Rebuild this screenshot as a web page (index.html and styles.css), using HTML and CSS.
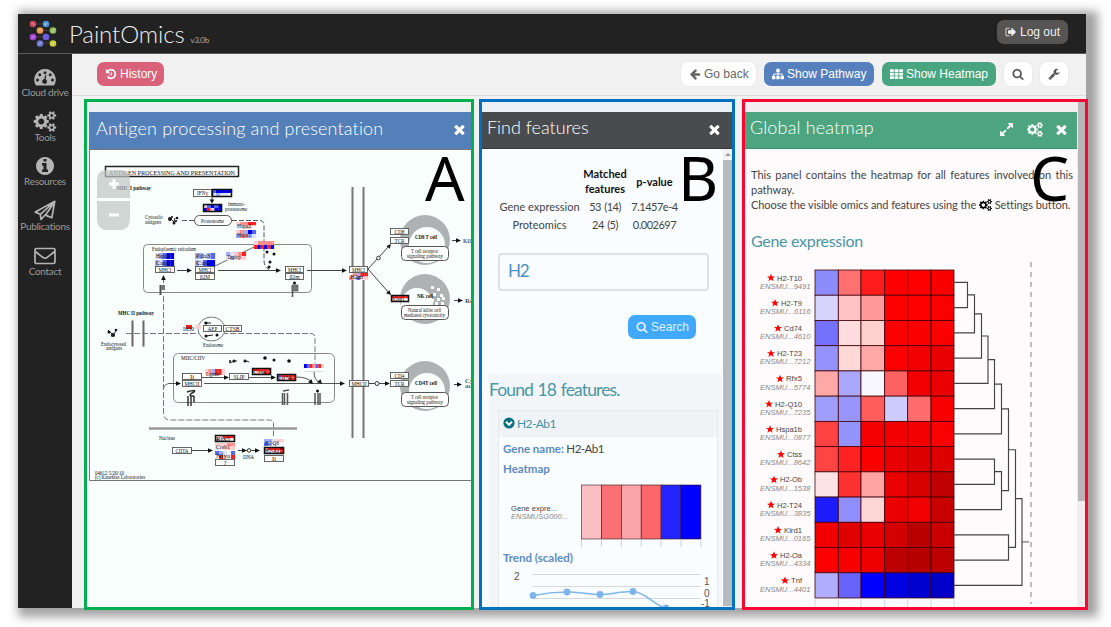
FILE: index.html
```html
<!DOCTYPE html>
<html lang="en">
<head>
<meta charset="utf-8">
<title>PaintOmics</title>
<link rel="stylesheet" href="styles.css">
</head>
<body>
<svg class="sprite" aria-hidden="true">
  <symbol id="i-history" viewBox="0 0 1792 1792"><path d="M1664 896q0 156-61 298t-164 245-245 164-298 61q-172 0-327-72.5t-264-204.5q-7-10-6.5-22.5t8.5-20.5l137-138q10-9 25-9 16 2 23 12 73 95 179 147t225 52q104 0 198.5-40.5t163.5-109.5 109.5-163.5 40.5-198.5-40.5-198.5-109.5-163.5-163.5-109.5-198.5-40.5q-98 0-188 35.5t-160 101.5l137 138q31 30 14 69-17 40-59 40h-448q-26 0-45-19t-19-45v-448q0-42 40-59 39-17 69 14l130 129q107-101 244.5-156.5t284.5-55.5q156 0 298 61t245 164 164 245 61 298zm-640-288v448q0 14-9 23t-23 9h-320q-14 0-23-9t-9-23v-64q0-14 9-23t23-9h224v-352q0-14 9-23t23-9h64q14 0 23 9t9 23z"/></symbol>
  <symbol id="i-search" viewBox="0 0 1792 1792"><path d="M1216 832q0-185-131.5-316.5t-316.5-131.5-316.5 131.5-131.5 316.5 131.5 316.5 316.5 131.5 316.5-131.5 131.5-316.5zm512 832q0 52-38 90t-90 38q-54 0-90-38l-343-342q-179 124-399 124-143 0-273.5-55.5t-225-150-150-225-55.5-273.5 55.5-273.5 150-225 225-150 273.5-55.5 273.5 55.5 225 150 150 225 55.5 273.5q0 220-124 399l343 343q37 37 37 90z"/></symbol>
  <symbol id="i-cogs" viewBox="0 0 1920 1792"><path d="M896 896q0-106-75-181t-181-75-181 75-75 181 75 181 181 75 181-75 75-181zm768 512q0-52-38-90t-90-38-90 38-38 90q0 53 37.5 90.5t90.5 37.5 90.5-37.5 37.5-90.5zm0-1024q0-52-38-90t-90-38-90 38-38 90q0 53 37.5 90.5t90.5 37.5 90.5-37.5 37.5-90.5zm-384 421v185q0 10-7 19.5t-16 10.5l-155 24q-11 35-32 76 34 48 90 115 7 11 7 20 0 12-7 19-23 30-82.5 89.5t-78.5 59.5q-11 0-21-7l-115-90q-37 19-77 31-11 108-23 155-7 24-30 24h-186q-11 0-20-7.5t-10-17.5l-23-153q-34-10-75-31l-118 89q-7 7-20 7-11 0-21-8-144-133-144-160 0-9 7-19 10-14 41-53t47-61q-23-44-35-82l-152-24q-10-1-17-9.5t-7-19.5v-185q0-10 7-19.5t16-10.5l155-24q11-35 32-76-34-48-90-115-7-11-7-20 0-12 7-20 22-30 82-89t79-59q11 0 21 7l115 90q34-18 77-32 11-108 23-154 7-24 30-24h186q11 0 20 7.5t10 17.5l23 153q34 10 75 31l118-89q8-7 20-7 11 0 21 8 144 133 144 160 0 8-7 19-12 16-42 54t-45 60q23 48 34 82l152 23q10 2 17 10.5t7 19.5zm640 533v140q0 16-149 31-12 27-30 52 51 113 51 138 0 4-4 7-122 71-124 71-8 0-46-47t-52-68q-20 2-30 2t-30-2q-14 21-52 68t-46 47q-2 0-124-71-4-3-4-7 0-25 51-138-18-25-30-52-149-15-149-31v-140q0-16 149-31 13-29 30-52-51-113-51-138 0-4 4-7 4-2 35-20t59-34 30-16q8 0 46 46.5t52 67.5q20-2 30-2t30 2q51-71 92-112l6-2q4 0 124 70 4 3 4 7 0 25-51 138 17 23 30 52 149 15 149 31zm0-1024v140q0 16-149 31-12 27-30 52 51 113 51 138 0 4-4 7-122 71-124 71-8 0-46-47t-52-68q-20 2-30 2t-30-2q-14 21-52 68t-46 47q-2 0-124-71-4-3-4-7 0-25 51-138-18-25-30-52-149-15-149-31v-140q0-16 149-31 13-29 30-52-51-113-51-138 0-4 4-7 4-2 35-20t59-34 30-16q8 0 46 46.5t52 67.5q20-2 30-2t30 2q51-71 92-112l6-2q4 0 124 70 4 3 4 7 0 25-51 138 17 23 30 52 149 15 149 31z"/></symbol>
  <symbol id="i-back" viewBox="0 0 1792 1792"><path d="M1664 896v128q0 53-32.500 90.500t-84.500 37.500h-704l293 294q38 36 38 90t-38 90l-75 76q-37 37-90 37-52 0-91-37l-651-652q-37-37-37-90 0-52 37-91l651-650q38-38 91-38 52 0 90 38l75 74q38 38 38 91t-38 91l-293 293h704q52 0 84.500 37.500t32.500 90.500z"/></symbol>
  <symbol id="i-sitemap" viewBox="0 0 1792 1792"><path d="M1792 1248v320q0 40-28 68t-68 28h-320q-40 0-68-28t-28-68v-320q0-40 28-68t68-28h96v-192h-512v192h96q40 0 68 28t28 68v320q0 40-28 68t-68 28h-320q-40 0-68-28t-28-68v-320q0-40 28-68t68-28h96v-192h-512v192h96q40 0 68 28t28 68v320q0 40-28 68t-68 28h-320q-40 0-68-28t-28-68v-320q0-40 28-68t68-28h96v-192q0-52 38-90t90-38h512v-192h-96q-40 0-68-28t-28-68v-320q0-40 28-68t68-28h320q40 0 68 28t28 68v320q0 40-28 68t-68 28h-96v192h512q52 0 90 38t38 90v192h96q40 0 68 28t28 68z"/></symbol>
  <symbol id="i-th" viewBox="0 0 16 14"><path d="M0 1h4.600v3.400H0zM5.700 1h4.600v3.400H5.700zM11.400 1H16v3.400h-4.600zM0 5.400h4.600v3.400H0zM5.700 5.400h4.600v3.400H5.700zM11.400 5.400H16v3.400h-4.600zM0 9.800h4.600v3.400H0zM5.700 9.800h4.600v3.400H5.700zM11.400 9.800H16v3.400h-4.600z"/></symbol>
  <symbol id="i-times" viewBox="250 370 1300 1300"><path d="M1490 1322q0 40-28 68l-136 136q-28 28-68 28t-68-28l-294-294-294 294q-28 28-68 28t-68-28l-136-136q-28-28-28-68t28-68l294-294-294-294q-28-28-28-68t28-68l136-136q28-28 68-28t68 28l294 294 294-294q28-28 68-28t68 28l136 136q28 28 28 68t-28 68l-294 294 294 294q28 28 28 68z"/></symbol>
  <symbol id="i-expand" viewBox="0 0 1792 1792"><path d="M883 1056q0 13-10 23l-332 332 144 144q19 19 19 45t-19 45-45 19h-448q-26 0-45-19t-19-45v-448q0-26 19-45t45-19 45 19l144 144 332-332q10-10 23-10t23 10l114 114q10 10 10 23zm781-864v448q0 26-19 45t-45 19-45-19l-144-144-332 332q-10 10-23 10t-23-10l-114-114q-10-10-10-23t10-23l332-332-144-144q-19-19-19-45t19-45 45-19h448q26 0 45 19t19 45z"/></symbol>
  <symbol id="i-wrench" viewBox="0 0 1792 1792"><path d="M448 1472q0-26-19-45t-45-19-45 19-19 45 19 45 45 19 45-19 19-45zm644-420l-682 682q-37 37-90 37-52 0-91-37l-106-108q-38-36-38-90 0-53 38-91l681-681q39 98 114.500 173.500t173.500 114.500zm634-435q0 39-23 106-47 134-164.500 217.500t-258.500 83.500q-185 0-316.500-131.500t-131.500-316.500 131.500-316.500 316.500-131.500q58 0 121.500 16.500t107.500 46.500q16 11 16 28t-16 28l-293 169v224l193 107q5-3 79-48.500t135.500-81 70.500-35.500q15 0 23.500 10t8.500 25z"/></symbol>
  <symbol id="i-signout" viewBox="0 0 1792 1792"><path d="M704 1440q0 4 1 20t.5 26.500-3 23.500-10 19.500-20.500 6.500h-320q-119 0-203.500-84.500t-84.500-203.500v-704q0-119 84.500-203.500t203.500-84.500h320q13 0 22.500 9.500t9.500 22.500q0 4 1 20t.5 26.500-3 23.500-10 19.500-20.500 6.500h-320q-66 0-113 47t-47 113v704q0 66 47 113t113 47h312l11.500 1 11.500 3 8 5.500 7 9 2 13.500zm928-544q0 26-19 45l-544 544q-19 19-45 19t-45-19-19-45v-288h-448q-26 0-45-19t-19-45v-384q0-26 19-45t45-19h448v-288q0-26 19-45t45-19 45 19l544 544q19 19 19 45z"/></symbol>
  <symbol id="i-info" viewBox="128 128 1536 1536"><path d="M1152 1376v-160q0-14-9-23t-23-9h-96v-512q0-14-9-23t-23-9h-320q-14 0-23 9t-9 23v160q0 14 9 23t23 9h96v320h-96q-14 0-23 9t-9 23v160q0 14 9 23t23 9h448q14 0 23-9t9-23zm-128-896v-160q0-14-9-23t-23-9h-192q-14 0-23 9t-9 23v160q0 14 9 23t23 9h192q14 0 23-9t9-23zm640 416q0 209-103 385.500t-279.500 279.500-385.500 103-385.500-103-279.500-279.500-103-385.500 103-385.500 279.500-279.500 385.500-103 385.500 103 279.500 279.500 103 385.500z"/></symbol>
</svg>

<div class="window">
  <header class="topbar">
    <svg class="logo" viewBox="0 0 30 30">
      <path d="M4 4h13M11 10.500l13 0M4 17l13 0M17 4l7 6.500M11 10.500l6 6.500 6 6.500M11 23h12" stroke="#4a4048" stroke-width=".8" fill="none"/>
      <circle cx="4" cy="4" r="3.300" fill="#c94a5e"/><circle cx="17" cy="4" r="3.300" fill="#4b90d8"/>
      <circle cx="11" cy="10.500" r="3.300" fill="#e8964a"/><circle cx="24" cy="10.500" r="3.300" fill="#8fbf62"/>
      <circle cx="4" cy="17" r="3.300" fill="#a945d8"/><circle cx="17" cy="17" r="3.300" fill="#6e5ee0"/>
      <circle cx="11" cy="23.500" r="3.300" fill="#6d78cf"/><circle cx="24" cy="23.500" r="3.300" fill="#c9cb3a"/>
      <path d="M2.500 3l3 2M15.500 5l3-2M2.500 18l3-2M22.500 12l3-3M9.500 24.500l3-2M22.500 24.500l3-2M15.500 3l2 2M9.500 10h3" stroke="#fff" stroke-opacity=".55" stroke-width=".9"/>
    </svg>
    <span class="brand">PaintOmics</span><span class="version">v3.0b</span>
    <button class="btn logout"><svg><use href="#i-signout"/></svg>Log out</button>
  </header>
  <div class="layout">
    <nav class="sidebar">
      <a class="item"><svg viewBox="0 0 22 18"><path fill-rule="evenodd" d="M11 1A10.700 10.700 0 0 0 2 17.500h18A10.700 10.700 0 0 0 11 1zM11 3.300a1.500 1.500 0 1 1 0 3 1.500 1.500 0 0 1 0-3zM5.800 5.300a1.500 1.500 0 1 1 0 3 1.500 1.500 0 0 1 0-3zM16.200 5.300a1.500 1.500 0 1 1 0 3 1.500 1.500 0 0 1 0-3zM3.500 10.500a1.500 1.500 0 1 1 0 3 1.500 1.500 0 0 1 0-3zM18.500 10.500a1.500 1.500 0 1 1 0 3 1.500 1.500 0 0 1 0-3zM12.500 7l-.9 4.300a2.400 2.400 0 1 1-1.400-.2L11.500 7z"/></svg><span>Cloud drive</span></a>
      <a class="item"><svg class="gears"><use href="#i-cogs"/></svg><span>Tools</span></a>
      <a class="item"><svg><use href="#i-info"/></svg><span>Resources</span></a>
      <a class="item"><svg viewBox="0 0 22 20" class="line plane"><path d="M20.800.8L1.300 11.600l5 2.200L20.800.8l-3 16.500-6.300-2.700L20 2.500M6.300 13.800l.7 5.200 4-4.500"/></svg><span>Publications</span></a>
      <a class="item"><svg viewBox="0 0 22 18" class="line"><rect x="1" y="1.500" width="20" height="15" rx="1.600"/><path d="M1.300 4.500c3 2.500 5 3.900 7.700 6q2 1.300 4 0c2.700-2.100 4.700-3.500 7.700-6"/></svg><span>Contact</span></a>
    </nav>
    <main class="main">
      <div class="toolbar">
        <button class="btn history"><svg><use href="#i-history"/></svg>History</button>
        <button class="btn white back"><svg><use href="#i-back"/></svg>Go back</button>
        <button class="btn pathway"><svg><use href="#i-sitemap"/></svg>Show Pathway</button>
        <button class="btn heatmap"><svg><use href="#i-th"/></svg>Show Heatmap</button>
        <button class="btn white square"><svg><use href="#i-search"/></svg></button>
        <button class="btn white square"><svg><use href="#i-wrench"/></svg></button>
      </div>
      <div class="panels">
        <section class="frame frame-a">
          <h2 class="head"><span class="t">Antigen processing and presentation</span><svg class="x"><use href="#i-times"/></svg></h2>
          <svg id="pathway" class="diagram" viewBox="87 149 384 458"></svg>
          <span class="mark">A</span>
        </section>
        <section class="frame frame-b">
          <h2 class="head"><span class="t">Find features</span><svg class="x"><use href="#i-times"/></svg></h2>
          <div class="scroller">
            <div class="content">
              <div class="stats">
                <span></span><b>Matched features</b><b>p-value</b>
                <span>Gene expression</span><span>53 (14)</span><span>7.1457e-4</span>
                <span>Proteomics</span><span>24 (5)</span><span>0.002697</span>
              </div>
              <div class="query">H2</div>
              <button class="btn search"><svg><use href="#i-search"/></svg>Search</button>
              <div class="results">
                <h3>Found 18 features.</h3>
                <div class="card">
                  <div class="card-head"><svg viewBox="0 0 12 12"><circle cx="6" cy="6" r="5.600" fill="#06727f"/><path d="M3 4.800l3 3 3-3" fill="none" stroke="#fff" stroke-width="2"/></svg>H2-Ab1</div>
                  <p><b>Gene name:</b> H2-Ab1</p>
                  <p class="sub"><b>Heatmap</b></p>
                  <svg id="mini" class="mini" viewBox="499 479 218 71"></svg>
                  <p class="sub"><b>Trend (scaled)</b></p>
                  <svg class="trend" viewBox="499 567 218 44">
                    <path d="M532 574.500h169M532 586.500h169M532 598.500h169" stroke="#d5d9dc"/>
                    <path d="M533 595.500C545 593 555 592 567 592s22 2.500 33 2.500 22-3.500 33-3c14 1 20 14 33 16.500" fill="none" stroke="#7cb5ec" stroke-width="1.500"/>
                    <g fill="#7cb5ec"><circle cx="533" cy="595.500" r="3.400"/><circle cx="567" cy="592" r="3.400"/><circle cx="600" cy="594.500" r="3.400"/><circle cx="633" cy="591.500" r="3.400"/><circle cx="666" cy="608" r="3.400"/></g>
                    <text x="514" y="580">2</text><text x="704" y="585">1</text><text x="704" y="597">0</text><text x="701" y="607">-1</text>
                  </svg>
                </div>
              </div>
            </div>
            <div class="bar"><i></i></div>
          </div>
          <span class="mark">B</span>
        </section>
        <section class="frame frame-c">
          <div class="column">
            <h2 class="head"><span class="t">Global heatmap</span><svg><use href="#i-expand"/></svg><svg class="cog"><use href="#i-cogs"/></svg><svg class="x"><use href="#i-times"/></svg></h2>
            <div class="intro">
              <p class="spread">This panel contains the heatmap for all features involved on this</p>
              <p>pathway.</p>
              <p class="spread">Choose the visible omics and features using the <svg><use href="#i-cogs"/></svg> Settings button.</p>
            </div>
            <h3>Gene expression</h3>
            <svg id="heat" class="heat" viewBox="745 255 332 352"></svg>
          </div>
          <div class="pagebar"><i></i></div>
          <span class="mark">C</span>
        </section>
      </div>
    </main>
  </div>
</div>
<script src="app.js"></script>
</body>
</html>
```
FILE: styles.css
```css
* { box-sizing: border-box; }
body { margin: 0; height: 627px; overflow: hidden; background: #fff; font-family: Lato, sans-serif; color: #444; padding: 14px 0 0 18px; }
svg { fill: currentColor; display: block; flex: none; }
h2, h3, p { margin: 0; font-weight: 400; }
.sprite { display: none; }
.window { width: 1068px; height: 594px; background: #f1f1f1; box-shadow: 6px 3px 9px 6px rgba(0,0,0,.36); display: flex; flex-direction: column; }

.topbar { height: 40px; flex: none; background: #222; border-bottom: 1px solid #5a5a5a; display: flex; align-items: center; padding: 0 18px 0 11px; color: #ddd; }
.logo { width: 30px; height: 30px; margin-top: 3px; }
.brand { font-size: 24px; font-weight: 300; color: #eee; margin-left: 10px; line-height: 38px; letter-spacing: -.1px; }
.version { font-size: 8px; margin: 12px auto 0 6px; color: #aaa; letter-spacing: -.3px; }

.btn { border: 0; border-radius: 7px; height: 24px; padding: 0 8px; display: flex; align-items: center; gap: 3px; font: 12px "Liberation Sans", sans-serif; color: #fff; white-space: nowrap; }
.btn svg { width: 12px; height: 12px; }
.logout { background: #575553; width: 71px; color: #eee; margin-top: -3px; }
.white { background: #fff; color: #666; box-shadow: 0 0 2px #ddd; }
.history { background: #d9627a; width: 67px; }
.back { margin-left: auto; width: 75px; }
.pathway { background: #557fbd; width: 110px; }
.heatmap { background: #48a580; width: 114px; }
.heatmap svg { width: 13px; }
.square { width: 28px; justify-content: center; color: #555; }

.layout { flex: 1; display: flex; min-height: 0; }
.sidebar { width: 54px; flex: none; background: #222; color: #b4b4b4; padding-top: 14px; }
.item { height: 44.7px; display: flex; flex-direction: column; align-items: center; font-size: 10px; line-height: 10px; white-space: nowrap; letter-spacing: -.3px; }
.item svg { width: 22px; height: 18px; margin-bottom: 1px; }
.item span { color: #999; }
.item .gears { width: 24px; height: 21px; margin: -2px 0 0; }
.item .plane { height: 21px; margin: -2px 0 0; }
.line { fill: none; stroke: currentColor; stroke-width: 1.7; stroke-linejoin: round; }

.main { flex: 1; display: flex; flex-direction: column; min-width: 0; }
.toolbar { height: 42px; flex: none; border-bottom: 1px solid #dcdcdc; display: flex; align-items: center; gap: 8px; padding: 0 18px 2px 25px; }
.panels { display: flex; padding: 3px 0 0 12px; }
.frame { position: relative; height: 511px; border: 3px solid; display: flex; flex-direction: column; flex: none; padding-top: 10px; }
.frame-a { width: 390px; border-color: #00b050; background: #eaf1f0; margin-right: 5px; }
.frame-b { width: 256px; border-color: #0070c0; background: #ecf1f5; margin-right: 7px; }
.frame-c { width: 346px; border-color: #fb0632; background: #f3eff0; flex-direction: row; padding-top: 0; }

.head { height: 37px; flex: none; display: flex; align-items: center; color: #fff; padding-right: 6px; }
.head .t { font-size: 18px; font-weight: 300; margin-right: auto; line-height: 20px; padding-bottom: 6px; white-space: nowrap; }
.head svg { width: 15px; height: 15px; margin-top: -2px; }
.head .x { width: 11px; height: 11px; margin-top: 0; }
.frame-a .head { margin-left: 2px; background: #5480b9; padding-left: 7px; }
.frame-a .t { letter-spacing: .15px; }
.frame-b .head { background: #494c4f; border-bottom: 1px solid #36383a; padding: 0 12px 0 5px; }
.frame-c .head { background: #4da580; border-bottom: 1px solid #38906c; padding: 0 10px 0 5px; }
.frame-c .head .t { letter-spacing: .15px; }
.frame-c .head svg { margin-left: 13px; }
.frame-c .head .cog { width: 16px; }
.diagram { width: 384px; height: 458px; background: #f8fffd; }
.diagram text { font-family: "Liberation Serif", serif; font-size: 7px; fill: #111; }

.mark { position: absolute; top: 40px; font: 62px/70px "Noto Sans", sans-serif; color: #000; }
.frame-a .mark { left: 338px; }
.frame-b .mark { left: 196px; }
.frame-c .mark { left: 285px; }

.scroller { flex: 1; min-height: 0; overflow: hidden; display: flex; background: #fafdff; }
.content { width: 241px; padding-top: 17px; }
.bar { width: 9px; background: #f0f2f4; padding-top: 11px; }
.bar::before { content: ""; display: block; width: 0; margin: -7px 0 4px 2px; border: 3px solid transparent; border-top-width: 0; border-bottom: 3px solid #999; }
.bar i { display: block; height: 446px; background: #b5babd; }
.stats { display: grid; grid-template-columns: 83px 48px 51px; grid-template-rows: 32px 18px 18px; margin-left: 16px; font-size: 11px; text-align: center; line-height: 18px; align-items: center; white-space: nowrap; }
.stats b { line-height: 15px; white-space: normal; color: #111; margin-bottom: 2px; }
.stats span:nth-child(3n+2), .stats span:nth-child(3n) { letter-spacing: -.5px; word-spacing: 1px; }
.query { margin: 19px 0 0 16px; width: 211px; height: 38px; border: 2px solid #dde1e5; border-radius: 4px; padding-left: 8px; line-height: 32px; font-size: 17px; letter-spacing: -1.2px; color: #4a8fc0; }
.search { margin: 24px 0 0 146px; width: 68px; background: #40a9fb; color: #dff0ff; }
.results { margin: 35px 0 0 7px; width: 233px; background: #f3f6f9; padding-top: 5px; height: 250px; }
h3 { font-size: 17px; color: #4a96a4; line-height: 22px; letter-spacing: -.88px; word-spacing: 1px; }
.results h3 { font-size: 17.5px; }
.card { margin: 9px 4px 0 9px; height: 230px; border: 1px solid #e6eaed; background: #fafdff; }
.card-head { height: 26px; background: #f0f3f6; display: flex; align-items: center; gap: 2px; padding: 0 0 2px 4px; color: #3f94a2; font-size: 12px; letter-spacing: -.6px; }
.card-head svg { width: 12px; height: 12px; }
.card p { padding-left: 4px; font-size: 11.500px; line-height: 23px; letter-spacing: -.5px; }
.card .sub { line-height: 18px; }
.card b { color: #5a8bc4; letter-spacing: 0; }
.mini { width: 218px; height: 71px; }
.trend { width: 218px; height: 44px; }
.mini text, .heat text { font-family: "Liberation Sans", sans-serif; font-size: 8px; fill: #444; }
.mini .id, .heat .id { fill: #888; font-style: italic; }
.trend text { font: 10px "Liberation Sans", sans-serif; fill: #555; }

.column { width: 332px; padding-top: 10px; background: linear-gradient(#f3eff0 10px, #fffbfc 10px); }
.pagebar { width: 8px; background: #f0edee; padding-left: 1px; }
.pagebar i { display: block; height: 399px; background: #bab6b8; }
.intro { padding: 18px 4px 0 6px; font-size: 11px; line-height: 15px; color: #444; }
.spread { text-align: justify; text-align-last: justify; white-space: nowrap; }
.intro .spread:last-child { margin-right: 3px; letter-spacing: -.07px; }
.intro svg { display: inline-block; width: 13px; height: 12px; vertical-align: -2px; color: #000; }
.column h3 { padding: 18px 0 0 6px; height: 43px; font-size: 16px; letter-spacing: -.3px; word-spacing: 0; }
.heat { width: 332px; height: 352px; }
```
FILE: app.js
```js
let out = '';
const flush = id => {
  document.getElementById(id).innerHTML = out;
  out = '';
};
const rect = (x, y, w, h, fill, stroke = 'none', sw = 1, rx = 0) => {
  out += `<rect x="${x}" y="${y}" width="${w}" height="${h}" fill="${fill}" stroke="${stroke}" stroke-width="${sw}" rx="${rx}"/>`;
};
const path = (d, stroke = '#444', extra = '') => {
  out += `<path d="${d}" fill="none" stroke="${stroke}" ${extra}/>`;
};
const text = (x, y, s, w, extra = '') => {
  out += `<text x="${x}" y="${y}" ${w ? `textLength="${w}" lengthAdjust="spacingAndGlyphs"` : ''} ${extra}>${s}</text>`;
};
const box = (x, y, w, h, s, tw) => {
  rect(x + .5, y + .5, w - 1, h - 1, '#fff', '#555', .9);
  text(x + (w - tw) / 2, y + h / 2 + 2.3, s, tw);
};
const arrow = (x, y, dir = 'r') => {
  const d = { r: 'l-5 -2.300v4.600z', d: 'l-2.300 -4h4.600z', u: 'l-2.300 5h4.600z', dr: 'l-5 -1.800 3.500 -3z', ur: 'l-4.500 2 3.200 2.800z' }[dir];
  out += `<path d="M${x} ${y}${d}" fill="#111"/>`;
};
/* one strip of expression cells per row; each letter is a colour of the palette */
const palette = { b: '#0000e8', m: '#5566f0', l: '#a3aef8', p: '#dde2fd', w: '#fbf6fc', k: '#ffd0d0', s: '#ff8f8f', r: '#fb2020', d: '#b80008' };
const strip = (x, y, w, h, rows, label, frame) => {
  const rh = h / rows.length;
  rows.forEach((row, j) => [...row].forEach((c, i) => rect(x + i * w / row.length, y + j * rh, w / row.length + .1, rh, palette[c])));
  if (frame) rect(x + .5, y + .5, w - 1, h - 1, 'none', '#111', 1.500);
  if (label) text(x + 1, y + h - 1, label, w * .7);
};
const dots = pts => pts.forEach(([x, y, r = 1.500]) => { out += `<circle cx="${x}" cy="${y}" r="${r}" fill="#111"/>`; });

/* Pathway map */
path('M89.500 149.500V480.500H471M89 149.500H471', '#777');
rect(105.500, 166.500, 133, 10, '#fff', '#222', 1.500);
text(109, 174.500, 'ANTIGEN PROCESSING AND PRESENTATION', 126);
text(117, 190, 'MHC I pathway', 34, 'font-weight="bold"');
text(118, 314.500, 'MHC II pathway', 36, 'font-weight="bold"');
path('M352.500 187v251M363.500 187v251', '#777', 'stroke-width="2"');
box(193, 189, 19, 8, 'IFNγ', 11);
strip(212, 189, 20, 8, ['mbbbb', 'plppw'], '', true);
path('M212 197v4'); arrow(212, 203.500, 'd');
strip(203, 204, 19, 8, ['kmbmb', 'brkbb'], '', true);
text(228, 206, 'Immuno-', 17); text(225, 211, 'proteasome', 22);
text(145, 219, 'Cytosolic', 18); text(145, 224, 'antigens', 16);
path('M182 220.500h12M232 220.500h28q4 0 4 5v34q0 8 5 10', '#555', 'stroke-dasharray="5 2"');
rect(194.500, 215.500, 37, 10, '#fff', '#555', 1, 5); text(201, 222.500, 'Proteasome', 23);
dots([[170, 219, 2], [174, 223, 1.500], [177, 218, 1.300], [172, 217, 1], [176, 221, 1]]);
path('M169 217l5 5 1-4M173 224l4-4', '#222');
strip(236, 222, 20, 7, ['kssrr', 'wwkkw'], 'Hspa2');
strip(236, 230, 20, 8, ['kslbm', 'lsslp'], 'Hspa1');
rect(143.500, 244.500, 168, 48, 'none', '#888', 1, 4);
text(152, 251, 'Endoplasmic reticulum', 44);
path('M215 266l39-19', '#666');
strip(155, 253, 19, 6, ['plmbb'], 'Hspa5'); strip(155, 260, 19, 6, ['lpmbb'], 'Canx');
strip(195, 253, 20, 6, ['llplm'], 'Pdia3'); strip(195, 260, 20, 6, ['lpmbb'], 'Calr');
box(155, 266, 20, 7, 'MHCI', 13); box(195, 266, 20, 7, 'MHCI', 13); box(195, 273, 20, 7, 'β2M', 10);
strip(226, 252, 20, 8, ['lpksr', 'plpkk'], 'Tapbp');
strip(254, 241, 20, 4, ['kssss']); strip(254, 245, 20, 4, ['rbrbrb']);
dots([[267, 252], [274, 254], [270, 262], [269, 267]]);
path('M177 270.500h12M218 270.500h58M307 270.500h36'); arrow(192, 270.500); arrow(281, 270.500); arrow(347, 270.500);
box(285, 266, 19, 7, 'MHCI', 13); box(285, 273, 19, 7, 'β2m', 10);
arrow(163.500, 275, 'u');
path('M163.500 280v3M163.500 296v116q0 8 6 8h100q4 0 4 4v12', '#777', 'stroke-dasharray="6 2"');
path('M160.500 285v10', '#555', 'stroke-width="2"'); rect(161, 285, 4, 5, '#777'); 
dots([[294.500, 283]]); path('M292.500 286v11', '#555', 'stroke-width="1.500"'); rect(292, 285, 6, 6, '#777', '#555', .7);

/* Cells on the right-hand side */
[[240, 'CD8 T cell', 'T cell receptor', 'signaling pathway'], [299, 'NK cell', 'Natural killer cell', 'mediated cytotoxicity'], [386, 'CD4T cell', 'T cell receptor', 'signaling pathway']].forEach(([cy, name, a, b], i) => {
  out += `<circle cx="425" cy="${cy}" r="25" fill="#aeb2b2"/><circle cx="${i === 1 ? 417 : 427}" cy="${cy + 5}" r="${i === 1 ? 16 : 18}" fill="#f8fffd"/>`;
  rect(401.500, cy + 6.500, 47, 14, '#fff', '#555', 1, 4);
  text(i === 1 ? 417 : 415, cy - 1, name, i === 1 ? 16 : 22, 'font-weight="bold"');
  text(i === 1 ? 408 : 411, cy + 12.500, a, i === 1 ? 33 : 27); text(i === 1 ? 404 : 407, cy + 17.800, b, i === 1 ? 41 : 36);
});
[[432, 287], [438, 289], [434, 294], [441, 295], [432, 300], [438, 299], [443, 298], [436, 303], [442, 303]].forEach(([x, y]) => rect(x - 1, y - 1, 3, 3, '#f8fffd'));
box(390, 228, 19, 7, 'CD8', 10); box(390, 237, 19, 7, 'TCR', 10);
strip(391, 295, 18, 7, ['rrrrr', 'wwkww'], 'Klrd1', true);
box(390, 372, 19, 7, 'CD4', 10); box(390, 380, 19, 7, 'TCR', 10);
path('M368 269l22-24M368 269l22 25'); arrow(391, 244, 'ur'); arrow(391, 295, 'dr');
out += '<circle cx="378.500" cy="258" r="1.800" fill="#fff" stroke="#333"/>';
box(349, 266, 19, 7, 'MHCI', 13); strip(349, 273, 19, 3.500, ['wslrr']); strip(349, 276.500, 19, 3.500, ['spmwk'], 'B2m');
path('M452 240.500h5M454 300.500h5M454 384.500h5'); arrow(461, 240.500); arrow(463, 300.500); arrow(462, 384.500);
text(463, 242.500, 'Killing', 18); text(465, 302.500, 'Regul', 18); text(465, 383, 'Cytok', 18); text(465, 388, 'activ', 16);

/* MHC II */
path('M132.500 320.500v26M143.500 320.500v26', '#666', 'stroke-width="2"');
path('M126 333.500h185q4 0 4 4v26', '#777', 'stroke-dasharray="6 2"');
dots([[109, 332, 1.500], [113, 335, 2], [116, 330, 1.300]]); path('M108 330l5 5 3-4M111 336l4-1', '#222');
text(101, 345.500, 'Endocytosed', 25); text(106, 350, 'antigens', 16);
out += '<ellipse cx="211.500" cy="329" rx="13.500" ry="12" fill="#f8fffd" stroke="#777"/>';
path('M204 323l7 0M206 336l7-1', '#222'); dots([[206, 323], [206, 336], [217, 335]]);
box(203, 325, 19, 7, 'AEP', 10); box(223, 325, 19, 7, 'CTSB', 14);
strip(183, 325, 18, 4, ['wrrwkk'], ''); text(183, 331, 'Ifi30', 11); text(203, 347, 'Endosome', 20);
rect(173.500, 353.500, 161, 49, 'none', '#888', 1, 5);
text(181, 360, 'MIIC/CIIV', 24);
dots([[234, 361], [245, 361], [265, 358, 1.800], [274, 360, 1.500], [289, 361, 1.800], [230, 361, 1]]); path('M229 363l6-2 2 0M244 360l5 2', '#222');
box(182, 373, 20, 7, 'Ii', 4); box(182, 380, 20, 7, 'MHCII', 15);
strip(205, 369, 20, 6, ['kslrrk'], ''); text(206, 376, 'Lgmn', 13);
box(229, 373, 20, 7, 'SLIP', 11);
strip(252, 368, 19, 7, ['rrrrr', 'wkwrr'], 'Ctss', true); strip(277, 374, 19, 7, ['mrrrr', 'lkwrr'], 'Cd74', true);
path('M202 377.500h24M249 377.500h25M296 377q11 0 16 5M314 371q0 9 5 11', '#555'); arrow(229, 377.500); arrow(276, 377.500);
path('M204 383.500h137M168 383.500h10', '#555'); path('M163.500 388q1-4 5-4.500', '#777'); arrow(181, 383.500); arrow(345, 383.500); arrow(313, 384, 'dr'); arrow(322, 384, 'dr');
strip(304, 364, 20, 4, ['bmrsmrk']); path('M305 371.500h18', '#ddd');
path('M187 392q10-3 7 0-8 4 0 4M188 396v10M191 396v10M194 396v6', '#333', 'stroke-width="1.500"');
path('M283 391l6-1M282.500 393v12M284.500 393v12M287.500 393v12M315 393v12M318 393v12M320 393v12', '#555', 'stroke-width="1.500"'); dots([[317.500, 391]]);
box(349, 380, 20, 7, 'MHCII', 15);
path('M369 383.500h17'); out += '<circle cx="377" cy="383.500" r="2" fill="#fff" stroke="#333"/>'; arrow(390, 383.500);
path('M149 428.500h148', '#999', 'stroke-width="2.500"');
text(159, 440, 'Nucleus', 16);
box(172, 447, 20, 7, 'CIITA', 13); path('M192 450.500h18'); arrow(213, 450.500);
strip(215, 435, 20, 7, ['kkrrr', 'lkkww'], 'Rfx5', true); strip(215, 443, 20, 7, ['kkkss', 'pwkkk'], 'Creb1'); strip(215, 451, 20, 8, ['mlpwm', 'wrkwr'], 'Nfya');
box(215, 459, 20, 7, '?', 3);
path('M238 450.500h17'); arrow(247, 450.500); arrow(260, 450.500); out += '<circle cx="249" cy="450.500" r="1.800" fill="#fff" stroke="#333"/>';
text(243, 458.500, 'DNA', 11);
strip(264, 439, 20, 7, ['llpkk', 'mlpww'], 'H2-Q6'); strip(264, 447, 20, 7, ['srrrd', 'kwkkr'], 'H2-Aa', true); box(264, 455, 20, 7, 'Ii', 4);
text(95, 474.500, '04612 5/20/10', 29); text(95, 479.300, '(c) Kanehisa Laboratories', 50);

/* Zoom buttons */
out += '<path d="M97 198v-17q0-11 10-11h13q10 0 10 11v17zM97 201h33v17q0 12-10 12h-13q-10 0-10-12z" fill="#bfc4c2" fill-opacity=".7"/><path d="M109 184h10M114 179v10M109 215h10" stroke="#fff" stroke-width="3" fill="none"/>';
flush('pathway');

/* Single-feature heatmap */
['#f9bfc2', '#fa7174', '#faa6a9', '#fb6669', '#2424fc', '#0000fe'].forEach((c, i) => rect(581.500 + i * 19.900, 486, 19.900, 54, c, '#3a1520', .6));
for (let i = 0; i < 7; i++) path(`M${581.500 + i * 19.900} 540v8`, '#c3d2e4');
text(511, 512, 'Gene expre...', 46);
text(511, 520, 'ENSMUSG000...', 57, 'class="id"');
flush('mini');

/* Global heatmap: label, id suffix, label start, cell colours */
const genes = [
  ['H2-T10', 9491, 777, '#8c8cfc #ff7070 #ff1c1c #ff0000 #ff0000 #f80000'],
  ['H2-T9', 6116, 781, '#d6d4fc #ffc2c4 #ff9a9a #ff0000 #ff0000 #fa0000'],
  ['Cd74', 4610, 784, '#7472fc #ffdcde #ffd0d0 #fa0000 #fa0000 #fa0000'],
  ['H2-T23', 7212, 777, '#9492fc #ffd8d8 #ffa8a8 #fa0000 #f20000 #e80000'],
  ['Rfx5', 5774, 786, '#ffa8a8 #aaa8fc #f8f6ff #ff6262 #f20000 #ea0000'],
  ['H2-Q10', 7235, 775, '#a09efc #9896fa #ff5c5c #ccccfe #ff6c6c #f80000'],
  ['Hspa1b', 877, 776, '#ff4242 #9492fc #f40000 #f20000 #f20000 #fa0000'],
  ['Ctss', 8642, 787, '#ff4444 #ff2222 #fc0000 #e80000 #dc0000 #dc0000'],
  ['H2-Ob', 1538, 780, '#ffe4e6 #ff3030 #ffa4a4 #ea0000 #d60000 #c00000'],
  ['H2-T24', 3835, 777, '#1c1cfc #908efc #ffd6d6 #ea0000 #f00000 #c80000'],
  ['Klrd1', 165, 784, '#f20000 #e00000 #e80000 #d40000 #b80000 #c80000'],
  ['H2-Oa', 4334, 780, '#fc0000 #f80000 #ee0000 #ba0000 #b60000 #bc0000'],
  ['Tnf', 4401, 791, '#b0aefc #6664fc #0000ff #0000e0 #0000d0 #0000c8']
];
const xs = [815, 838.300, 861, 884.700, 907.700, 931, 954];
const step = 25.230;
genes.forEach(([name, id, x, cells], j) => {
  const y = 270 + j * step;
  cells.split(' ').forEach((c, i) => rect(xs[i], y, xs[i + 1] - xs[i], step, c, '#400008', .8));
  text(x, y + 10.500, name, 802 - x);
  out += `<path d="M${x - 6} ${y + 3.800}l1.100 2.700 2.900.1-2.300 1.800.9 2.900-2.600-1.700-2.600 1.700.9-2.900-2.300-1.800 2.900-.1z" fill="#f00"/>`;
  text(760, y + 18.800, 'ENSMU...' + String(id).padStart(4, '0'), 50.500, 'class="id"');
});
xs.forEach(x => path(`M${x} 598v9`, '#c9d6ea'));

/* Dendrogram: a joint links two children; leaves are row indexes */
const leaf = i => [954, 282.300 + i * 25.250];
const join = (a, b, x) => {
  path(`M${a[0]} ${a[1]}H${x}V${b[1]}H${b[0]}`, '#444', 'stroke-width="1.150"');
  return [x, (a[1] + b[1]) / 2];
};
let node = join(leaf(0), leaf(1), 967.500);
[974.500, 981.500, 988, 994.500, 1001.500].forEach((x, i) => { node = join(node, leaf(i + 2), x); });
const mid = join(join(leaf(7), leaf(8), 994.500), leaf(9), 1001.500);
node = join(node, mid, 1008.500);
node = join(node, join(leaf(10), leaf(11), 1008.500), 1015.500);
node = join(node, leaf(12), 1022);
path(`M${node[0]} ${node[1]}h7`, '#555');
path('M1031 262v342', '#aaa', 'stroke-width="1.500" stroke-dasharray="5 5"');
flush('heat');
```
